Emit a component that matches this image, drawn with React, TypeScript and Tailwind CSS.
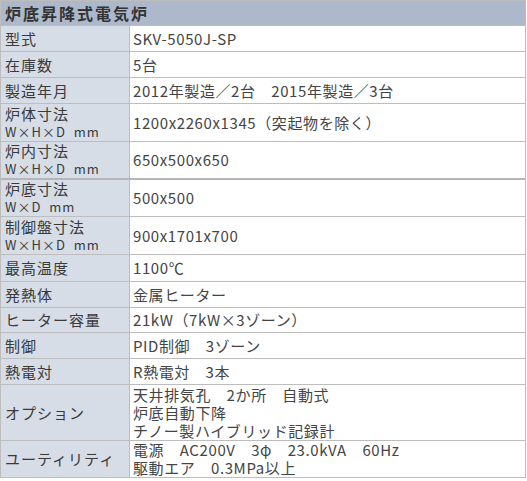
import React from "react";

type Row = { label: React.ReactNode; value: React.ReactNode; h: string; thick?: boolean };

const sub = (t: string) => (
  <div className="text-[13px] leading-[18px] tracking-[1px]">{t}</div>
);

const rows: Row[] = [
  { label: "型式", value: "SKV-5050J-SP", h: "h-[25px]" },
  { label: "在庫数", value: "5台", h: "h-[25px]" },
  { label: "製造年月", value: "2012年製造／2台　2015年製造／3台", h: "h-[25px]" },
  {
    label: (
      <>
        <div className="leading-[18px]">炉体寸法</div>
        {sub("W×H×D\u00a0 mm")}
      </>
    ),
    value: "1200x2260x1345（突起物を除く）",
    h: "h-[37px]",
  },
  {
    label: (
      <>
        <div className="leading-[18px]">炉内寸法</div>
        {sub("W×H×D\u00a0 mm")}
      </>
    ),
    value: "650x500x650",
    h: "h-[36px]",
    thick: true,
  },
  {
    label: (
      <>
        <div className="leading-[18px]">炉底寸法</div>
        {sub("W×D\u00a0 mm")}
      </>
    ),
    value: "500x500",
    h: "h-[36px]",
  },
  {
    label: (
      <>
        <div className="leading-[18px]">制御盤寸法</div>
        {sub("W×H×D\u00a0 mm")}
      </>
    ),
    value: "900x1701x700",
    h: "h-[37px]",
  },
  { label: "最高温度", value: "1100℃", h: "h-[26px]" },
  { label: "発熱体", value: "金属ヒーター", h: "h-[25px]" },
  { label: "ヒーター容量", value: "21kW（7kW×3ゾーン）", h: "h-[24px]" },
  { label: "制御", value: "PID制御　3ゾーン", h: "h-[25px]" },
  { label: "熱電対", value: "R熱電対　3本", h: "h-[25px]" },
  {
    label: "オプション",
    value: (
      <>
        <div className="h-[18px]">天井排気孔　2か所　自動式</div>
        <div className="h-[18px]">炉底自動下降</div>
        <div className="h-[18px]">チノー製ハイブリッド記録計</div>
      </>
    ),
    h: "h-[55px]",
  },
  {
    label: "ユーティリティ",
    value: (
      <>
        <div className="h-[18px]">電源　AC200V　3φ　23.0kVA　60Hz</div>
        <div className="h-[18px]">駆動エア　0.3MPa以上</div>
      </>
    ),
    h: "h-[36px]",
  },
];

export default function App() {
  return (
    <div
      className="w-[527px] h-[481px] bg-white"
      style={{ fontFamily: '"Noto Sans CJK JP", "Noto Sans", sans-serif' }}
    >
      <div className="w-[526px] border border-[#bdbdbd] text-[#3c3c3c]">
        <div className="h-[25px] bg-[#adb9cb] border-b border-[#bdbdbd] flex items-center pl-[4px] text-[16px] font-bold tracking-[2px] text-[#333]">
          炉底昇降式電気炉
        </div>
        {rows.map((r, i) => (
          <div
            key={i}
            className={`flex ${i === rows.length - 1 ? "" : r.thick ? "border-b-2 border-[#b5b5b5]" : "border-b border-[#bdbdbd]"}`}
          >
            <div
              className={`${r.h} w-[129px] shrink-0 bg-[#d6dde6] border-r border-[#bdbdbd] flex flex-col justify-center pl-[4px] text-[15px] leading-[18px] tracking-[1px] text-[#3a3a3a]`}
            >
              {r.label}
            </div>
            <div
              className={`${r.h} flex-1 flex flex-col justify-center pl-[3px] text-[15px] leading-[18px] tracking-[0.6px] text-[#444]`}
            >
              {r.value}
            </div>
          </div>
        ))}
      </div>
    </div>
  );
}
